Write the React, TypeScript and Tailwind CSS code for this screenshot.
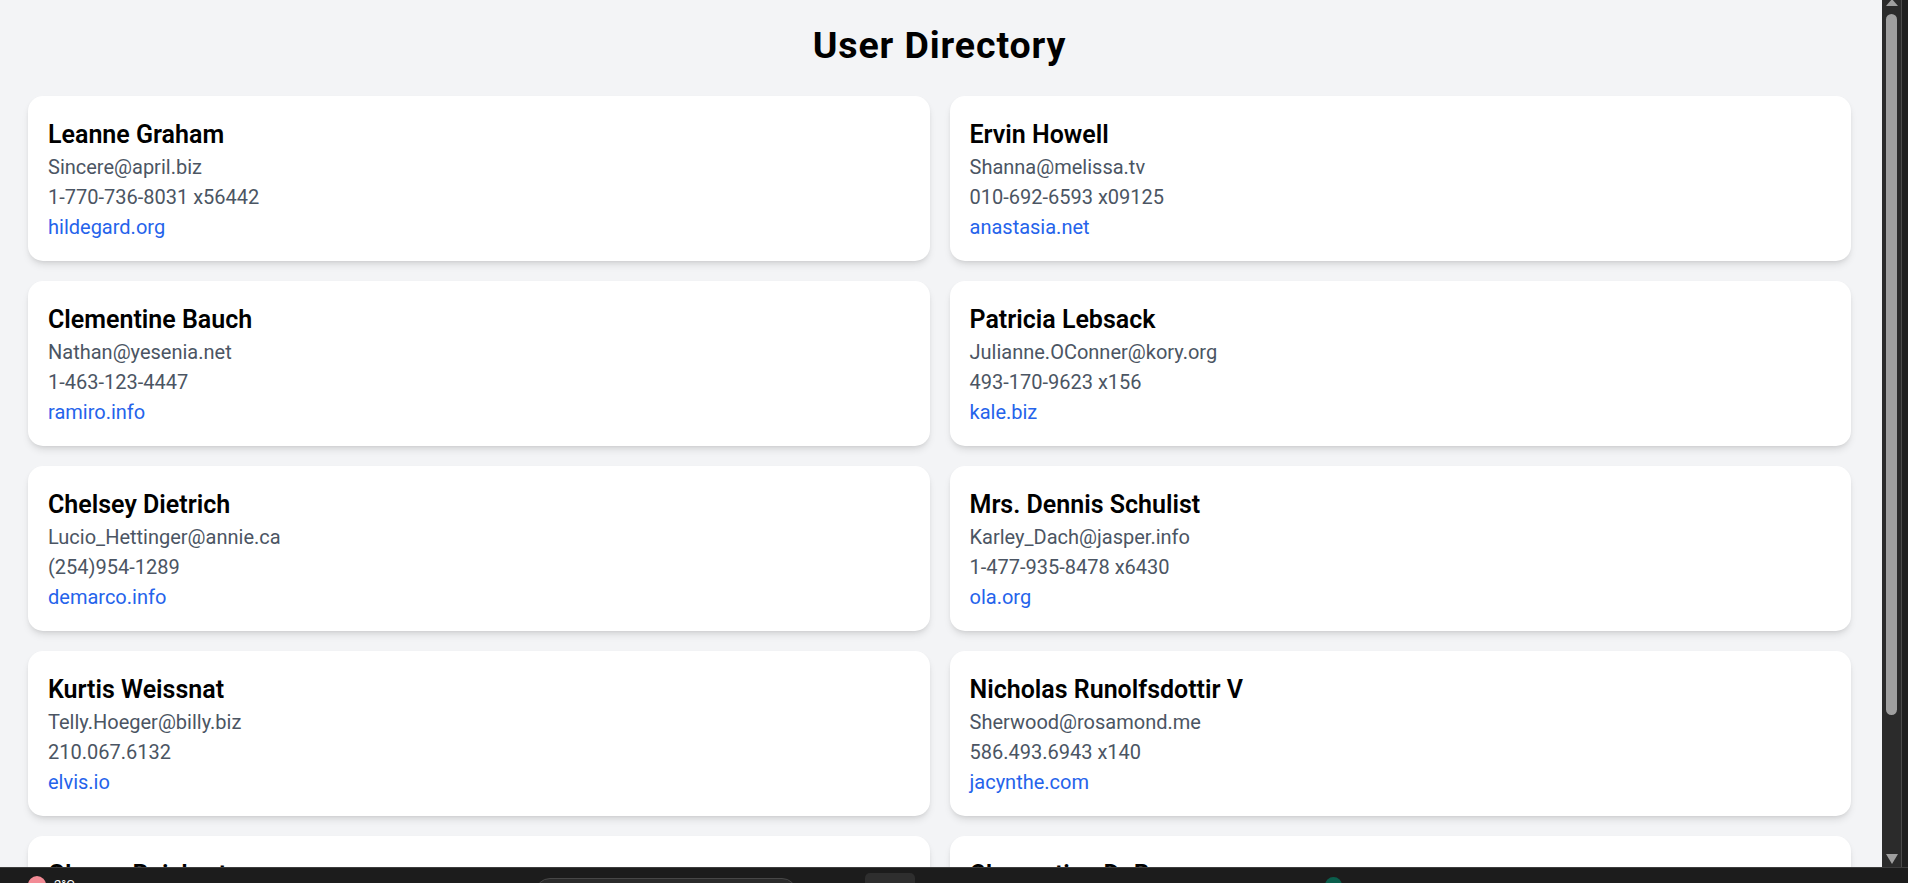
import React from 'react';

// User Directory — карточки пользователей в две колонки
// Размеры взяты со скриншота (масштаб 125%), поэтому в пикселях экрана.

interface User {
  name: string;
  email: string;
  phone: string;
  website: string;
}

const users: User[] = [
  { name: 'Leanne Graham', email: 'Sincere@april.biz', phone: '1-770-736-8031 x56442', website: 'hildegard.org' },
  { name: 'Ervin Howell', email: 'Shanna@melissa.tv', phone: '010-692-6593 x09125', website: 'anastasia.net' },
  { name: 'Clementine Bauch', email: 'Nathan@yesenia.net', phone: '1-463-123-4447', website: 'ramiro.info' },
  { name: 'Patricia Lebsack', email: 'Julianne.OConner@kory.org', phone: '493-170-9623 x156', website: 'kale.biz' },
  { name: 'Chelsey Dietrich', email: 'Lucio_Hettinger@annie.ca', phone: '(254)954-1289', website: 'demarco.info' },
  { name: 'Mrs. Dennis Schulist', email: 'Karley_Dach@jasper.info', phone: '1-477-935-8478 x6430', website: 'ola.org' },
  { name: 'Kurtis Weissnat', email: 'Telly.Hoeger@billy.biz', phone: '210.067.6132', website: 'elvis.io' },
  { name: 'Nicholas Runolfsdottir V', email: 'Sherwood@rosamond.me', phone: '586.493.6943 x140', website: 'jacynthe.com' },
  { name: 'Glenna Reichert', email: 'Chaim_McDermott@dana.io', phone: '(775)976-6794 x41206', website: 'conrad.com' },
  { name: 'Clementina DuBuque', email: 'Rey.Padberg@karina.biz', phone: '024-648-3804', website: 'ambrose.net' },
];

// ── Card ─────────────────────────────────────────────────────────────────────

function UserCard({ user }: { user: User }) {
  return (
    <div className="bg-white rounded-[15px] pt-[21px] pb-[19px] px-[20px] shadow-[0_5px_8px_-2px_rgba(0,0,0,0.12),0_2px_5px_-2px_rgba(0,0,0,0.1)]">
      <h2 className="text-[25px] leading-[35px] font-semibold text-black">{user.name}</h2>
      <p className="text-[20px] leading-[30px] text-[#4b5563]">{user.email}</p>
      <p className="text-[20px] leading-[30px] text-[#4b5563]">{user.phone}</p>
      <a href="#" className="block text-[20px] leading-[30px] text-[#2563eb]">
        {user.website}
      </a>
    </div>
  );
}

// ── Window chrome: scrollbar + taskbar ───────────────────────────────────────

function Scrollbar() {
  return (
    <div className="w-[26px] shrink-0 flex bg-[#1f1f1f]">
      <div className="w-[19px] bg-[#2b2b2b] flex flex-col items-center">
        <svg width="12" height="7" viewBox="0 0 12 7" className="mt-[-1px]">
          <path d="M6 0 L12 7 L0 7 Z" fill="#9f9f9f" />
        </svg>
        <div className="mt-[8px] w-[11px] h-[701px] rounded-full bg-[#9f9f9f]" />
        <div className="flex-1" />
        <svg width="12" height="10" viewBox="0 0 12 10" className="mb-[3px]">
          <path d="M0 0 L12 0 L6 10 Z" fill="#9f9f9f" />
        </svg>
      </div>
      <div className="w-px bg-[#4a4a4a]" />
    </div>
  );
}

function Taskbar() {
  return (
    <div className="h-[16px] shrink-0 bg-[#1c1c1c] border-t border-[#3d3d3d] flex items-start overflow-hidden">
      <div className="ml-[28px] mt-[8px] w-[18px] h-[18px] rounded-full bg-[#f28b95]" />
      <span className="ml-[8px] mt-[9px] text-[13px] leading-[16px] text-white">2°C</span>
      <div className="ml-[460px] mt-[10px] w-[262px] h-[30px] rounded-full bg-[#2b2b2b] border border-[#474747]" />
      <div className="ml-[68px] mt-[5px] w-[50px] h-[30px] rounded-[5px] bg-[#2e2e2e]" />
      <div className="ml-[410px] mt-[9px] w-[17px] h-[17px] rounded-full bg-[#0b5e4c]" />
      <span className="ml-auto mr-[100px] mt-[12px] text-[13px] leading-[16px] text-white">17:34</span>
    </div>
  );
}

// ── Page ─────────────────────────────────────────────────────────────────────

export default function App() {
  return (
    <div className="w-[1908px] h-[883px] flex flex-col overflow-hidden font-['Roboto',sans-serif]">
      <div className="flex flex-1 min-h-0">
        <main className="flex-1 min-w-0 bg-[#f3f4f6] overflow-hidden pl-[28px] pr-[31px] pt-[23px]">
          <h1 className="text-center text-[37.5px] leading-[45px] font-bold tracking-[0.9px] text-black mb-[28px]">
            User Directory
          </h1>
          <div className="grid grid-cols-2 gap-[20px] pb-[30px]">
            {users.map((u) => (
              <UserCard key={u.email} user={u} />
            ))}
          </div>
        </main>
        <Scrollbar />
      </div>
      <Taskbar />
    </div>
  );
}
